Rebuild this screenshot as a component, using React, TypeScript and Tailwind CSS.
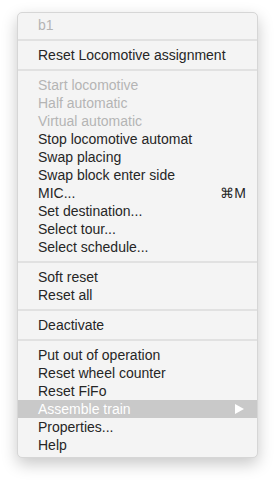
import React from 'react';

type Item = {
  label: string;
  disabled?: boolean;
  shortcut?: string;
  submenu?: boolean;
  active?: boolean;
};

const groups: Item[][] = [
  [{ label: 'b1', disabled: true }],
  [{ label: 'Reset Locomotive assignment' }],
  [
    { label: 'Start locomotive', disabled: true },
    { label: 'Half automatic', disabled: true },
    { label: 'Virtual automatic', disabled: true },
    { label: 'Stop locomotive automat' },
    { label: 'Swap placing' },
    { label: 'Swap block enter side' },
    { label: 'MIC...', shortcut: '⌘M' },
    { label: 'Set destination...' },
    { label: 'Select tour...' },
    { label: 'Select schedule...' },
  ],
  [{ label: 'Soft reset' }, { label: 'Reset all' }],
  [{ label: 'Deactivate' }],
  [
    { label: 'Put out of operation' },
    { label: 'Reset wheel counter' },
    { label: 'Reset FiFo' },
    { label: 'Assemble train', submenu: true, active: true },
    { label: 'Properties...' },
    { label: 'Help' },
  ],
];

const MenuRow: React.FC<{ item: Item }> = ({ item }) => {
  const color = item.active
    ? 'text-white bg-[#c9c9c9]'
    : item.disabled
      ? 'text-[#b4b4b4]'
      : 'text-[#262626]';
  return (
    <div className={`flex items-center justify-between h-[18px] pl-[20px] pr-[11px] ${color}`}>
      <span>{item.label}</span>
      {item.shortcut && <span className="text-[#262626]">{item.shortcut}</span>}
      {item.submenu && (
        <svg width="9" height="10" viewBox="0 0 9 10" className="mr-[2px]">
          <path d="M0 0 L9 5 L0 10 Z" fill="#ffffff" />
        </svg>
      )}
    </div>
  );
};

export default function App() {
  return (
    <div className="w-[275px] h-[480px] bg-white pt-[12px] pl-[17px]">
      <div
        className="w-[241px] bg-[#f4f4f4] rounded-[5px] border border-[#d6d6d6] shadow-[0_6px_16px_rgba(0,0,0,0.22)] py-[3px] text-[14px] leading-[18px]"
        style={{ fontFamily: '"Liberation Sans", Arial, sans-serif' }}
      >
        {groups.map((group, gi) => (
          <div key={gi}>
            {gi > 0 && <div className="h-[2px] bg-[#e1e1e1] my-[5px]" />}
            {group.map((item) => (
              <MenuRow key={item.label} item={item} />
            ))}
          </div>
        ))}
      </div>
    </div>
  );
}
